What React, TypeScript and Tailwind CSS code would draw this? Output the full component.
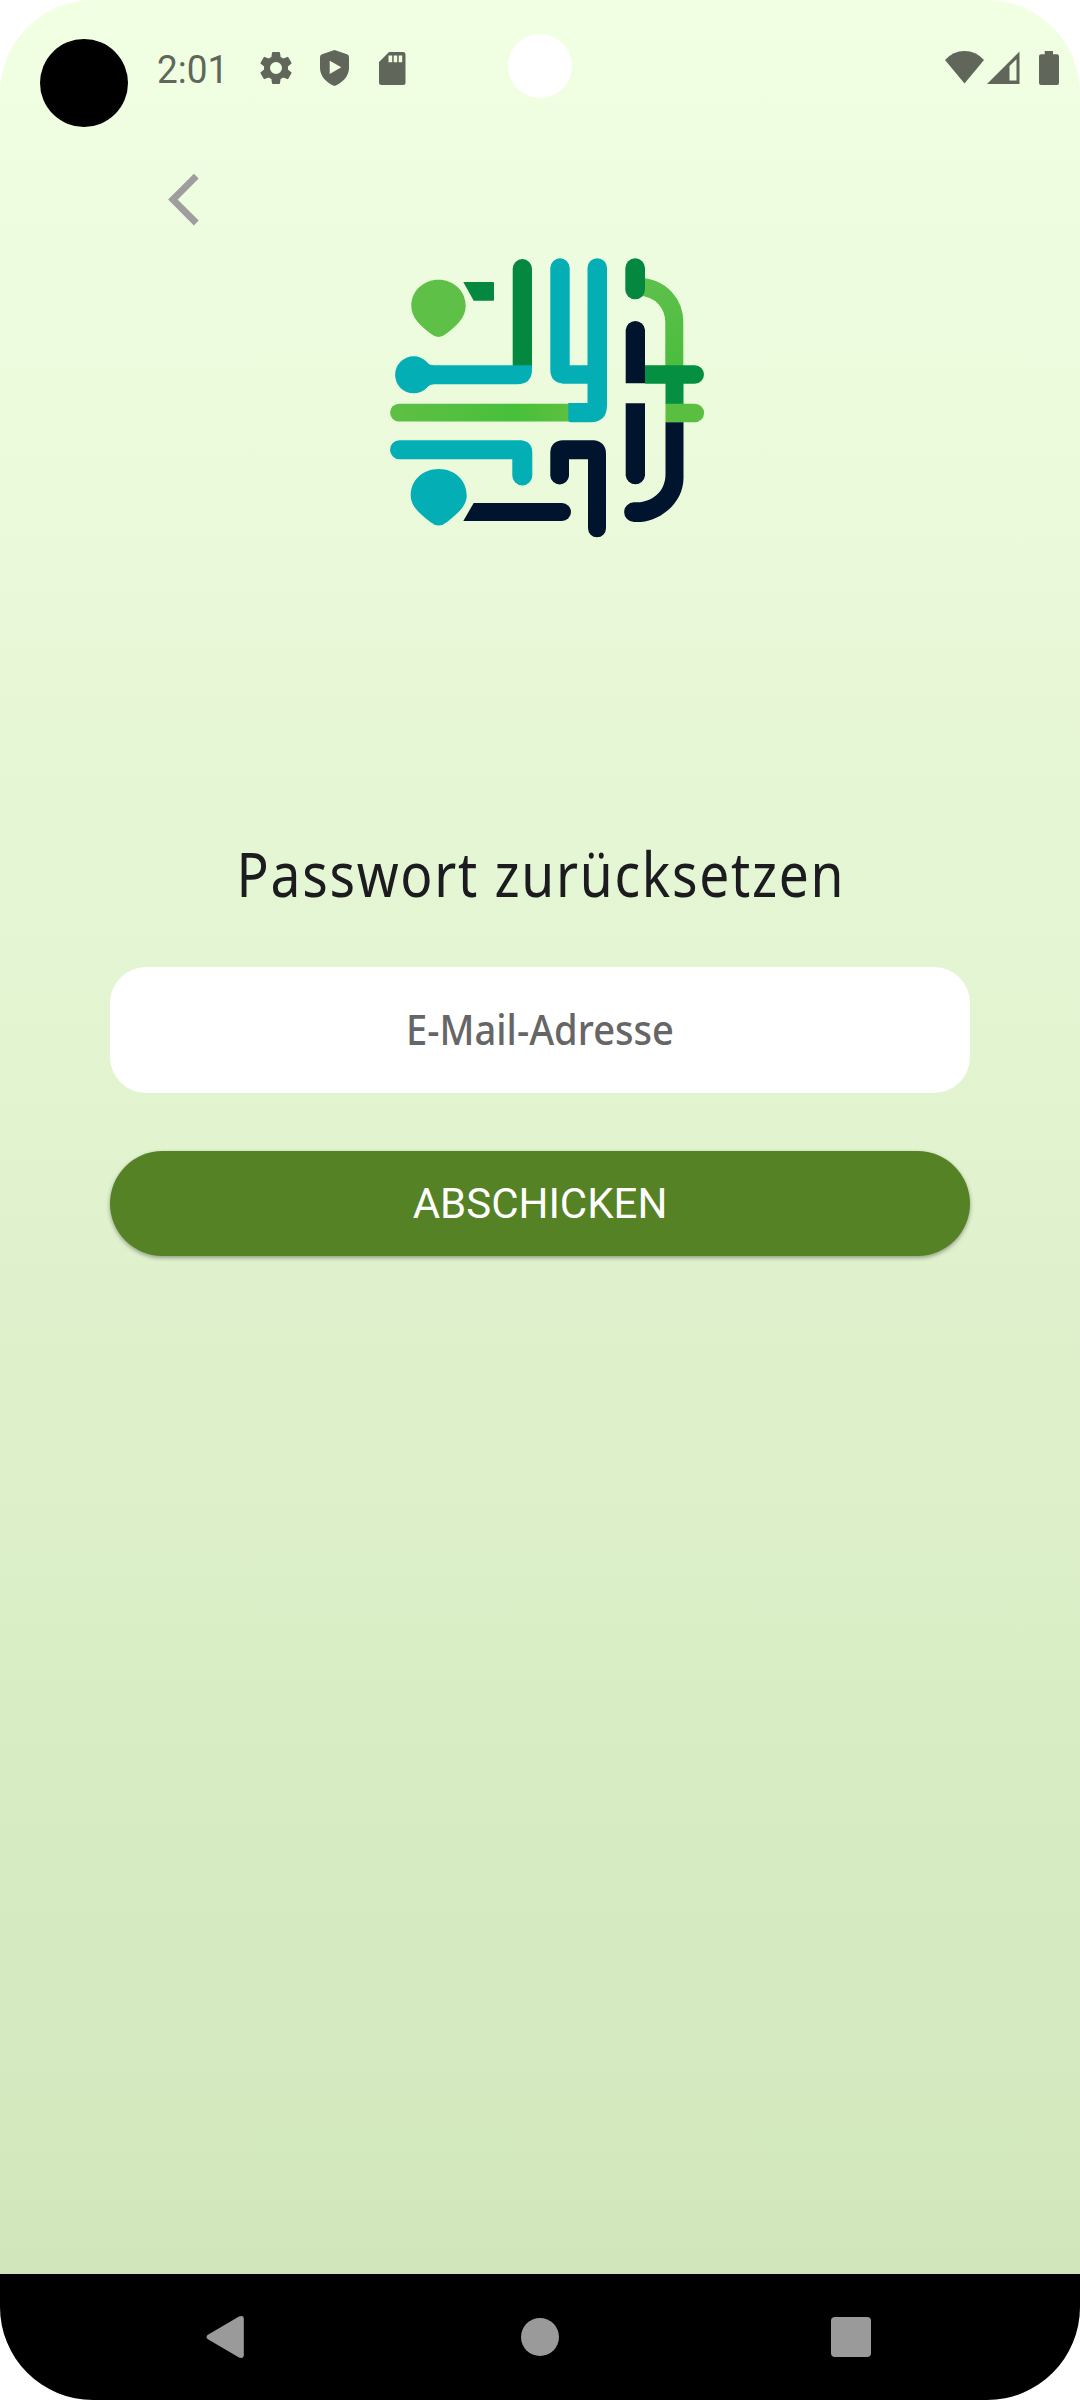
import React from "react";

function StatusBar() {
  return (
    <header className="relative flex h-[136px] items-start justify-between pr-[20px] pl-[40px] text-[#60675a]">
      <div className="flex">
        <div className="mt-[39px] size-[88px] rounded-full bg-black" />
        <span className="mt-[46px] ml-[28px] w-[66px] origin-left translate-x-[1px] translate-y-[.5px] scale-x-[.96] text-[38.5px] leading-[46px] whitespace-nowrap">2:01</span>
        <svg className="mt-[48px] ml-[34px] size-10" viewBox="0 0 24 24" fill="currentColor">
          <path d="M19.14 12.94c.04-.3.06-.61.06-.94 0-.32-.02-.64-.07-.94l2.03-1.58a.49.49 0 0 0 .12-.61l-1.92-3.32a.49.49 0 0 0-.59-.22l-2.39.96c-.5-.38-1.03-.7-1.62-.94l-.36-2.54a.48.48 0 0 0-.48-.41h-3.84a.48.48 0 0 0-.47.41l-.36 2.54c-.59.24-1.13.57-1.62.94l-2.39-.96a.49.49 0 0 0-.59.22L2.74 8.87a.48.48 0 0 0 .12.61l2.03 1.58c-.05.3-.09.63-.09.94s.02.64.07.94l-2.03 1.58a.49.49 0 0 0-.12.61l1.92 3.32c.12.22.37.29.59.22l2.39-.96c.5.38 1.03.7 1.62.94l.36 2.54c.05.24.24.41.48.41h3.84c.24 0 .44-.17.47-.41l.36-2.54c.59-.24 1.13-.56 1.62-.94l2.39.96c.22.08.47 0 .59-.22l1.92-3.32a.48.48 0 0 0-.12-.61l-2.01-1.58zM12 15.6A3.6 3.6 0 1 1 12 8.4a3.6 3.6 0 0 1 0 7.2z" />
        </svg>
        <svg className="mt-[50px] ml-[24px] h-[36px] w-[29px]" viewBox="0 0 29 36" fill="currentColor" fillRule="evenodd">
          <path d="M14.5 0 27 4.300Q29 5 29 7V18C29 26 22.500 33 14.500 36C6.500 33 0 26 0 18V7Q0 5 2 4.300ZM9.700 10.800V24L21.300 17.300Z" />
        </svg>
        <svg className="mt-[51.500px] ml-[30px] h-[33px] w-[27px]" viewBox="0 0 27 33" fill="currentColor" fillRule="evenodd">
          <path d="M10 0H24Q26.500 0 26.500 2.500V30.500Q26.500 33 24 33H2.500Q0 33 0 30.500V10ZM9.500 3.500V10.300H13.200V3.500ZM14.700 3.500V10.300H18.200V3.500ZM19.700 3.500V10.300H23.200V3.500Z" />
        </svg>
      </div>
      <div className="absolute top-[33.500px] left-[508px] size-16 rounded-full bg-white" />
      <div className="mt-[51px] flex">
        <svg className="h-[34px] w-[39px]" viewBox="0 0 39 34" fill="currentColor">
          <path d="M0 9Q8 0 19.500 0T39 9L19.500 32.500Z" />
        </svg>
        <svg className="ml-[3px] h-[34px] w-[33px]" viewBox="0 0 33 34" fill="currentColor" fillRule="evenodd">
          <path d="M0 33 32.500 .5V33ZM22.500 15V29.500H29.500V8.300Z" />
        </svg>
        <svg className="ml-[18px] h-[34px] w-[22px]" viewBox="0 0 22 34" fill="currentColor">
          <path d="M6.700 0H15V3.200H19Q21 3.200 21 5.200V32Q21 34 19 34H3Q1 34 1 32V5.200Q1 3.200 3 3.200H6.700Z" />
        </svg>
      </div>
    </header>
  );
}

function Logo() {
  return (
    <svg className="mx-auto mt-[22px] h-[300px] w-[330px] translate-x-[5px]" viewBox="380 250 330 300">
      <defs>
        <linearGradient id="lime" gradientUnits="userSpaceOnUse" x1="390" x2="570" y1="0" y2="0">
          <stop offset="0" stopColor="#5fbf46" />
          <stop offset=".7" stopColor="#47c03a" />
          <stop offset="1" stopColor="#5dc040" />
        </linearGradient>
        <linearGradient id="stem" x1="0" x2="0" y1="0" y2="1">
          <stop offset="0" stopColor="#5cc04a" />
          <stop offset="1" stopColor="#4bbd3e" />
        </linearGradient>
      </defs>
      <path fill="#5ec046" d="M411.300 306C411.300 290.500 424 279.800 438.500 279.800S465.700 290.500 465.700 306C465.700 318 456 326 446.500 333.500Q438.500 340.500 430.500 333.500C421 326 411.300 318 411.300 306Z" />
      <path fill="#04873f" d="M463.300 282H493Q494 282 494 283V299.700Q494 300.700 493 300.700H473.700Z" />
      <path fill="#04873f" d="M512.700 366V268.700A9.600 9.600 0 0 1 532 268.700V366Z" />
      <circle cx="413.600" cy="374.800" r="18.500" fill="#03aeb5" />
      <path fill="#03aeb5" d="M427 363Q430 365.300 434 365.300H532V369.300Q532 384.300 517 384.300H434Q430 384.300 427 387Z" />
      <path fill="url(#lime)" d="M399 403.700H570V421.500H399A8.900 8.900 0 0 1 399 403.700Z" />
      <path fill="#03aeb5" d="M399.500 440.300H521Q532.300 441.500 532.300 453V475.500A10 10 0 0 1 512.300 475.500V459.200H399.500A9.450 9.450 0 0 1 399.500 440.300Z" />
      <path fill="#03aeb5" d="M410.700 495.500C410.700 480 423 469 438.700 469S466.700 480 466.700 495.500C466.700 507 456 514.500 447 522Q438.700 529 430.300 522C421 514.500 410.700 507 410.700 495.500Z" />
      <path fill="#00142e" d="M473.700 503H562A9 9 0 0 1 562 521H463.300Z" />
      <path fill="#03aeb5" d="M550.300 268A9.700 9.700 0 0 1 569.700 268V365.300H587.500V268A9.700 9.700 0 0 1 607 268V405Q607 422.300 590 422.300H571Q568.300 422.300 568.300 419.600V403H587.500V383.700H563Q550.300 382 550.300 370Z" />
      <path fill="none" stroke="url(#stem)" strokeWidth="18" d="M638 286.700C662 287 674.300 305 674.300 322V366" />
      <rect x="625.300" y="258.300" width="19.700" height="41" rx="9.800" fill="#04873f" />
      <path fill="#00142e" d="M625.700 383.300V329.700A9.700 9.700 0 0 1 645 329.700V383.300Z" />
      <path fill="#058f40" d="M645 365.300H694.800A9.200 9.200 0 0 1 694.800 383.700H683.500V404H665.500V383.700H645Z" />
      <path fill="#5abf40" d="M665.500 403.700H694.800A9.300 9.300 0 0 1 694.800 422.300H665.500Z" />
      <path fill="#00142e" d="M625.700 403.300H645V475.600A9.700 9.700 0 0 1 625.700 475.600Z" />
      <path fill="#00142e" d="M665.500 422.300H683.500V478C683.500 502 662 520 641 522H634A9.800 9.800 0 0 1 634 502.300H640C655 500 665.500 490 665.500 474Z" />
      <path fill="#00142e" d="M550.300 452Q551 441 563 440.300H594Q606 442 606 454V528.300A9 9 0 0 1 588 528.300V459.200H569V476A9.400 9.400 0 0 1 550.300 476Z" />
    </svg>
  );
}

function NavigationBar() {
  return (
    <nav className="flex h-[126px] items-center justify-between bg-black pr-[209px] pl-[206px] text-[#9a9a9a]">
      <svg className="h-[44px] w-[39px]" viewBox="0 0 39 44" fill="currentColor">
        <path d="M1.500 20 33 1.500Q37.800-.5 37.800 4V40Q37.800 44 33 42.500L1.500 24Q-.5 22 1.500 20Z" />
      </svg>
      <div className="ml-[4px] size-[38px] rounded-full bg-[#9a9a9a]" />
      <div className="size-10 rounded bg-[#9a9a9a]" />
    </nav>
  );
}

export default function App() {
  return (
    <div className="h-[2400px] w-[1080px] bg-white font-['Roboto',sans-serif]">
      <div className="flex h-full flex-col overflow-hidden rounded-[93px]">
        <div className="flex flex-1 flex-col bg-linear-to-b from-[#f1ffe3] to-[#d1e7bb]">
          <StatusBar />
          <main className="flex flex-1 flex-col px-[110px]">
            <svg className="mt-[36px] ml-[54px] h-[56px] w-[40px]" viewBox="164 172 40 56" fill="none" stroke="#9e9e9e" strokeWidth="6.800">
              <path d="M196.300 176.200 172.900 199.600 196.300 223" />
            </svg>
            <Logo />
            <h1 className="mt-[278px] flex h-[90px] items-center justify-center font-['Noto_Sans',sans-serif] text-[62px] whitespace-nowrap text-[#1c1b1f]">
              <span className="block translate-x-[1px] scale-x-[.86] tracking-[2px]">Passwort zurücksetzen</span>
            </h1>
            <div className="mt-[49px] h-[126px] rounded-[36px] bg-white">
              <input
                className="h-full w-full scale-x-[.93] bg-transparent pb-[2px] text-center font-['Noto_Sans',sans-serif] text-[41px] font-medium text-[#666] outline-none placeholder:text-[#666]"
                placeholder="E-Mail-Adresse"
              />
            </div>
            <button className="mt-[58px] h-[105px] w-full rounded-full bg-[#548224] text-[42px] text-white shadow-[0_2px_4px_rgba(0,0,0,0.35)]">
              ABSCHICKEN
            </button>
          </main>
        </div>
        <NavigationBar />
      </div>
    </div>
  );
}
